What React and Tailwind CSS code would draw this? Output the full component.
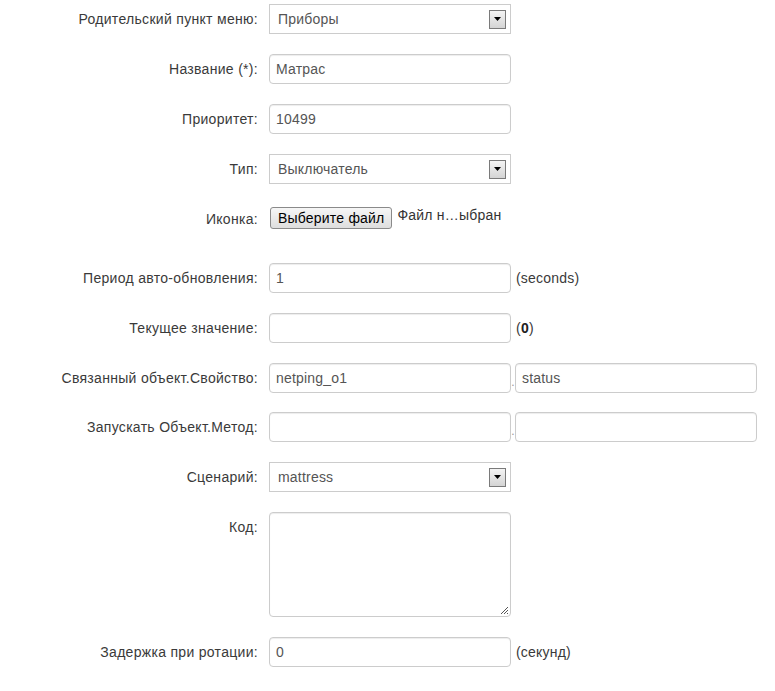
import React from 'react';

const font = { fontFamily: '"Liberation Sans", Arial, sans-serif' };

const Row = ({ label, children, className = 'mb-5' }) => (
    <div className={`flex items-start ${className}`}>
        <label className="w-[258px] shrink-0 pt-[5px] text-right text-[14px] leading-5 tracking-[0.3px] text-[#3a3a3a]">{label}</label>
        <div className="ml-[11px] flex items-start">{children}</div>
    </div>
);

const Input = ({ value = '' }) => (
    <div className="h-[30px] w-[242px] rounded-[4px] border border-[#ccc] bg-white px-[6px] text-[14px] leading-[28px] tracking-[0.2px] text-[#555] shadow-[inset_0_1px_1px_rgba(0,0,0,0.075)]">
        {value}
    </div>
);

const Select = ({ value }) => (
    <div className="flex h-[30px] w-[242px] items-center justify-between border border-[#ccc] bg-white pl-[8px] pr-[4px] text-[14px] tracking-[0.2px] text-[#555]">
        <span>{value}</span>
        <span className="flex h-[19px] w-[17px] items-center justify-center border border-[#7a7a7a] bg-gradient-to-b from-[#f4f4f4] to-[#d4d4d4]">
            <svg width="7" height="4" viewBox="0 0 7 4">
                <path d="M0 0h7L3.5 4z" fill="#000" />
            </svg>
        </span>
    </div>
);

const Suffix = ({ children }) => (
    <span className="ml-[5px] pt-[5px] text-[14px] leading-5 tracking-[0.2px] text-[#3a3a3a]">{children}</span>
);

const Pair = ({ a = '', b = '' }) => (
    <>
        <Input value={a} />
        <span className="w-[4px] pt-[9px] text-center text-[12px] leading-5 text-[#999]">.</span>
        <Input value={b} />
    </>
);

export default function App() {
    return (
        <div className="min-h-screen bg-white pt-[4px]" style={font}>
            <Row label="Родительский пункт меню:">
                <Select value="Приборы" />
            </Row>
            <Row label="Название (*):">
                <Input value="Матрас" />
            </Row>
            <Row label="Приоритет:">
                <Input value="10499" />
            </Row>
            <Row label="Тип:">
                <Select value="Выключатель" />
            </Row>
            <Row label="Иконка:" className="mb-5 h-[39px]">
                <div className="ml-px flex items-start pt-[3px]">
                    <button className="h-[22px] rounded-[3px] border border-[#8a8a8a] bg-gradient-to-b from-[#f6f6f6] to-[#dedede] px-[7px] text-[14px] leading-[20px] tracking-[0.2px] text-black">
                        Выберите файл
                    </button>
                    <span className="ml-[5px] mt-[-2px] text-[14px] leading-5 tracking-[0.2px] text-[#333]">Файл н…ыбран</span>
                </div>
            </Row>
            <Row label="Период авто-обновления:">
                <Input value="1" />
                <Suffix>(seconds)</Suffix>
            </Row>
            <Row label="Текущее значение:">
                <Input />
                <Suffix>
                    (<b className="text-[#222]">0</b>)
                </Suffix>
            </Row>
            <Row label="Связанный объект.Свойство:" className="mb-[19px]">
                <Pair a="netping_o1" b="status" />
            </Row>
            <Row label="Запускать Объект.Метод:">
                <Pair />
            </Row>
            <Row label="Сценарий:">
                <Select value="mattress" />
            </Row>
            <Row label="Код:">
                <div className="relative h-[105px] w-[242px] rounded-[4px] border border-[#ccc] bg-white shadow-[inset_0_1px_1px_rgba(0,0,0,0.075)]">
                    <svg className="absolute bottom-[1px] right-[1px]" width="9" height="9" viewBox="0 0 9 9">
                        <path d="M8 1L1 8M8 4L4 8M8 7L7 8" stroke="#555" strokeWidth="1" />
                    </svg>
                </div>
            </Row>
            <Row label="Задержка при ротации:">
                <Input value="0" />
                <Suffix>(секунд)</Suffix>
            </Row>
        </div>
    );
}
